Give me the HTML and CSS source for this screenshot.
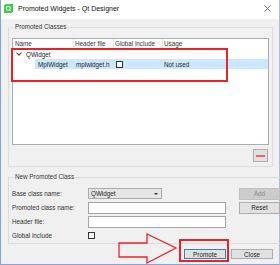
FILE: index.html
```html
<!DOCTYPE html>
<html lang="en">
<head>
    <meta charset="UTF-8">
    <title>Promoted Widgets - Qt Designer</title>
    <link rel="stylesheet" href="styles.css">
</head>
<body>
    <div class="window">
        <!-- Title bar -->
        <div class="titlebar">
            <svg class="app-icon" width="9" height="9" viewBox="0 0 9 9">
                <path d="M1.5 0 H9 V7.5 L7.5 9 H0 V1.5 Z" fill="#41cd52"/>
                <circle cx="4.3" cy="4.3" r="2" fill="none" stroke="#fff" stroke-width="1"/>
                <path d="M5 5 L6.6 6.8" stroke="#fff" stroke-width="1"/>
            </svg>
            <span class="title">Promoted Widgets - Qt Designer</span>
            <svg class="close-x" width="7" height="7" viewBox="0 0 7 7">
                <path d="M0.5 0.5 L6.5 6.5 M6.5 0.5 L0.5 6.5" stroke="#555" stroke-width="0.8"/>
            </svg>
        </div>

        <div class="content">
            <!-- Promoted classes -->
            <fieldset class="group group-classes">
                <legend>Promoted Classes</legend>
                <div class="tree">
                    <div class="tree-head">
                        <div class="col col-name">Name</div>
                        <div class="col col-header">Header file</div>
                        <div class="col col-global">Global include</div>
                        <div class="col col-usage">Usage</div>
                    </div>
                    <div class="tree-row">
                        <span class="chevron"></span>
                        <span class="base-name">QWidget</span>
                    </div>
                    <div class="tree-row child selected">
                        <div class="child-name">MplWidget</div>
                        <div class="child-header">mplwidget.h</div>
                        <div class="child-global"><span class="check"></span></div>
                        <div class="child-usage">Not used</div>
                    </div>
                </div>
                <div class="remove-row">
                    <button class="btn-remove" type="button"><span></span></button>
                </div>
            </fieldset>

            <!-- New promoted class -->
            <fieldset class="group group-new">
                <legend>New Promoted Class</legend>
                <div class="form-grid">
                    <label>Base class name:</label>
                    <div class="combo">QWidget<span class="combo-arrow"></span></div>
                    <button class="btn btn-disabled btn-side" type="button">Add</button>

                    <label>Promoted class name:</label>
                    <div class="field"></div>
                    <button class="btn btn-side" type="button">Reset</button>

                    <label>Header file:</label>
                    <div class="field"></div>
                    <div></div>

                    <label>Global include</label>
                    <div><span class="check"></span></div>
                    <div></div>
                </div>
            </fieldset>

            <div class="dialog-buttons">
                <button class="btn btn-default" type="button">Promote</button>
                <button class="btn" type="button">Close</button>
            </div>
        </div>

        <!-- Annotations drawn over the dialog -->
        <div class="mark mark-tree"></div>
        <div class="mark mark-promote"></div>
        <svg class="arrow" width="62" height="34" viewBox="0 0 62 34">
            <polygon points="1,10 29,10 29,1 58,15 29,30 29,24 1,24" fill="none" stroke="#e8242b" stroke-width="1.3"/>
        </svg>
    </div>
</body>
</html>
```

FILE: styles.css
```css
* {
    box-sizing: border-box;
    margin: 0;
    padding: 0;
}

body {
    font-family: "Liberation Sans", Arial, sans-serif;
    font-size: 6.3px;
    color: #222;
    background-color: #fff;
}

.window {
    position: relative;
    width: 280px;
    height: 265px;
    border-left: 1px solid #7ea6dc;
    border-right: 1px solid #a9bde6;
    border-bottom: 1px solid #7ea6dc;
    background-color: #fff;
}

/* Title bar */
.titlebar {
    height: 19px;
    display: flex;
    align-items: center;
    padding: 0 0 3px 3px;
    background-color: #fff;
}

.app-icon {
    flex: none;
}

.title {
    margin-left: 5px;
    font-size: 7px;
    color: #111;
    flex: 1;
}

.close-x {
    margin-right: 8px;
}

.content {
    height: 245px;
    background-color: #f0f0f0;
    padding-top: 4px;
}

/* Group boxes */
.group {
    border: 1px solid #dcdcdc;
    margin: 0 7px 0 7px;
}

.group legend {
    margin-left: 2px;
    padding: 0 1px;
    line-height: 8px;
    color: #333;
}

.group-classes {
    padding: 7px 3px 4px 3px;
}

.group-new {
    margin-top: 6px;
    padding: 6px 3px 1px 3px;
}

/* Tree view */
.tree {
    width: 257px;
    height: 107px;
    background-color: #fff;
    border: 1px solid #abadb3;
}

.tree-head {
    display: flex;
    height: 10px;
    line-height: 9px;
    color: #333;
}

.col {
    border-right: 1px solid #e5e5e5;
    padding-left: 1px;
}

.col-name {
    width: 61px;
    padding-left: 2px;
}

.col-header {
    width: 40px;
}

.col-global {
    width: 49px;
}

.col-usage {
    flex: 1;
    border-right: none;
}

.tree-row {
    display: flex;
    align-items: center;
    height: 10px;
}

.chevron {
    width: 4px;
    height: 4px;
    margin: 0 5px 2px 4px;
    border-right: 1px solid #444;
    border-bottom: 1px solid #444;
    transform: rotate(45deg);
}

.tree-row.child {
    margin-left: 22px;
}

.selected {
    background-color: #cce8ff;
}

.child-name {
    width: 39px;
    padding-left: 3px;
}

.child-header {
    width: 40px;
    padding-left: 2px;
}

.child-global {
    width: 49px;
    padding-left: 2px;
    display: flex;
}

.child-usage {
    padding-left: 1px;
}

.check {
    display: block;
    width: 7px;
    height: 7px;
    border: 1px solid #333;
    background-color: #fff;
}

.remove-row {
    display: flex;
    justify-content: flex-end;
    padding: 4px 1px 0 0;
}

.btn-remove {
    width: 15px;
    height: 13px;
    border: 1px solid #adadad;
    background-color: #e1e1e1;
    display: flex;
    align-items: center;
    justify-content: center;
}

.btn-remove span {
    width: 9px;
    height: 2px;
    background-color: #e8636c;
}

/* New class form */
.form-grid {
    display: grid;
    grid-template-columns: 63px 138px 41px;
    column-gap: 13px;
    grid-auto-rows: 13px;
    row-gap: 1px;
    align-items: center;
}

.form-grid label {
    color: #333;
}

.combo {
    position: relative;
    width: 74px;
    height: 11px;
    line-height: 9px;
    padding-left: 2px;
    border: 1px solid #acacac;
    background-color: #e5e5e5;
}

.combo-arrow {
    position: absolute;
    right: 3px;
    top: 4px;
    border-left: 2px solid transparent;
    border-right: 2px solid transparent;
    border-top: 2px solid #333;
}

.field {
    height: 12px;
    border: 1px solid #a5a5a5;
    background-color: #fff;
}

.btn {
    font-family: inherit;
    font-size: 6.3px;
    color: #222;
    width: 42px;
    height: 10px;
    border: 1px solid #adadad;
    background-color: #e1e1e1;
}

.btn-side {
    width: 41px;
    height: 12px;
}

.btn-disabled {
    color: #888;
    background-color: #cccccc;
    border-color: #bfbfbf;
}

.btn-default {
    border-color: #3c7fb1;
    margin-right: 5px;
}

.dialog-buttons {
    display: flex;
    justify-content: flex-end;
    padding: 5px 6px 0 0;
}

/* Red annotations */
.mark {
    position: absolute;
    border: 2px solid #e8242b;
}

.mark-tree {
    left: 10px;
    top: 48px;
    width: 217px;
    height: 34px;
}

.mark-promote {
    left: 178px;
    top: 239px;
    width: 50px;
    height: 23px;
}

.arrow {
    position: absolute;
    left: 117px;
    top: 233px;
}
```
